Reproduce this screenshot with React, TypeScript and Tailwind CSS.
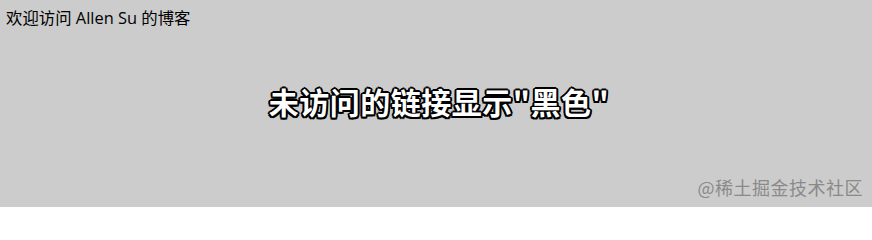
export default function App() {
  return (
    <div className="flex h-[207px] w-[872px] flex-col overflow-hidden bg-[#cccccc] font-['Noto_Sans_CJK_SC','Noto_Sans',sans-serif] text-black">
      <div className="px-[6px] pt-[7px] font-['Open_Sans','Noto_Sans_CJK_SC',sans-serif] text-[16.4px] leading-[22px]">
        欢迎访问 Allen Su 的博客
      </div>
      <div className="flex flex-1 items-center justify-center pb-[3px] pl-[6px]">
        <span className="text-[30px] font-bold leading-[38px] tracking-[0.5px] text-white [text-shadow:2px_0_0_#000,-2px_0_0_#000,0_2px_0_#000,0_-2px_0_#000,1.5px_1.5px_0_#000,-1.5px_-1.5px_0_#000,1.5px_-1.5px_0_#000,-1.5px_1.5px_0_#000]">
          未访问的链接显示"黑色"
        </span>
      </div>
      <div className="flex justify-end pb-[8px] pr-[9px] text-[18px] leading-[24px] tracking-[0.5px] text-[#8a8a8a]">
        @稀土掘金技术社区
      </div>
    </div>
  );
}
